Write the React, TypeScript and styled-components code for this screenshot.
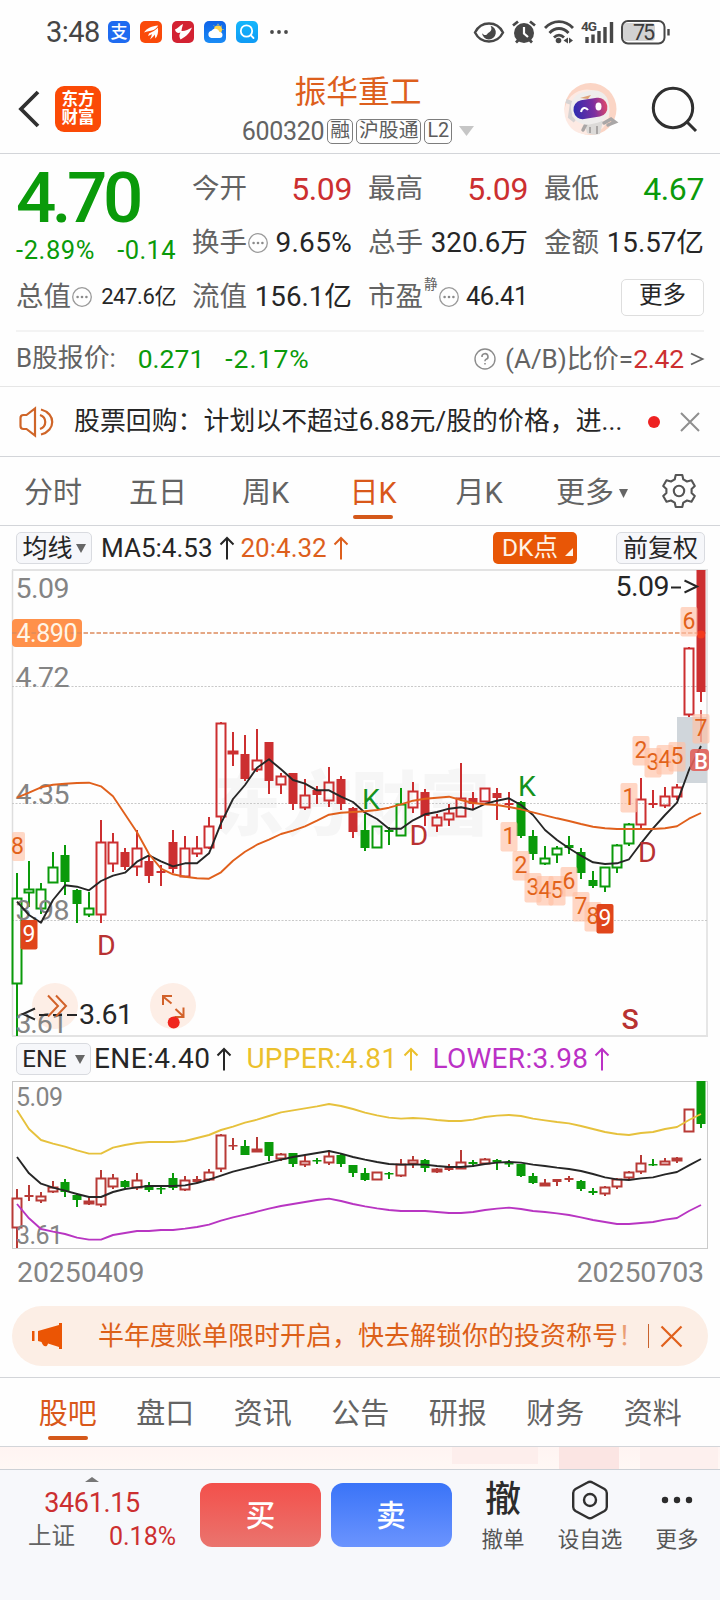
import React from "react";
import styled, { createGlobalStyle } from "styled-components";

const FONT = `Roboto, "Noto Sans CJK SC", sans-serif`;
const ORANGE = "#dd5f1d";
const RED = "#cc2f30";
const GREEN = "#0a9a0a";
const GREY = "#636363";
const INK = "#262626";
const LINE = "#d3d5d9";

const GlobalStyle = createGlobalStyle`
  * { box-sizing: border-box; }
  body { margin: 0; background: #fff; font-family: ${FONT}; color: ${INK}; }
  svg { display: block; flex: none; overflow: visible; }
`;

const Page = styled.div`
  width: 720px;
  height: 1600px;
  overflow: hidden;
  display: flex;
  flex-direction: column;
  background: #fefefe;
`;

const Text = styled.span<{ $size: number; $color?: string; $weight?: number; $ls?: number; $ml?: number; $dy?: number }>`
  flex: none;
  white-space: nowrap;
  line-height: 1;
  font-size: ${(p) => p.$size}px;
  color: ${(p) => p.$color ?? INK};
  font-weight: ${(p) => p.$weight ?? 400};
  letter-spacing: ${(p) => p.$ls ?? 0}px;
  margin-left: ${(p) => p.$ml ?? 0}px;
  transform: translateY(${(p) => p.$dy ?? 0}px);
`;

/* ---------- status bar ---------- */

const StatusBar = styled.div`
  height: 64px;
  padding: 0 49px 0 46px;
  display: flex;
  align-items: center;
  justify-content: space-between;
`;
const StatusGroup = styled.div`
  display: flex;
  align-items: center;
`;
const AppIcons = styled.div`
  display: flex;
  gap: 10px;
  margin-left: 8px;
`;
const AppIcon = styled.div<{ $bg: string }>`
  width: 22px;
  height: 22px;
  border-radius: 5px;
  background: ${(p) => p.$bg};
  color: #fff;
  font-size: 17px;
  line-height: 22px;
  font-weight: 500;
  text-align: center;
`;

function StatusIcons() {
  return (
    <svg width="198" height="26" viewBox="473 19 198 26" fill="none" stroke="#474747" strokeWidth="2.4">
      <path d="M475 32.500C481 20.500 497 20.500 503 32.500C497 44.500 481 44.500 475 32.500Z" />
      <path d="M490.500 25.800A6.900 6.900 0 1 1 482 33C484 36 487 35.500 488 33C491 32 492.500 29 490.500 25.800Z" fill="#474747" stroke="none" />
      <circle cx="524" cy="33" r="10" fill="#474747" stroke="none" />
      <path d="M524 27V33.500L528 37" stroke="#fff" strokeWidth="2.200" />
      <path d="M513 25.500L518 21.500M535 25.500L530 21.500M516 42.500L518.500 40M532 42.500L529.500 40" strokeWidth="2.800" />
      <path d="M545 28C553 19.500 565 19.500 573 28M549.500 33C555 27 563 27 568.500 33M554 37.500C557 34.500 561 34.500 564 37.500" strokeWidth="2.800" />
      <circle cx="558.500" cy="40.500" r="2.800" fill="#474747" stroke="none" />
      <path d="M563.500 40.500L568 37.500V43.500ZM573 40.500L569 37.500V43.500Z" fill="#474747" stroke="none" />
      <text x="581" y="31" fontFamily={FONT} fontSize="13.500" fontWeight="700" fill="#474747" stroke="none" textLength="16">4G</text>
      <path d="M587 37V43M593 34.500V43M599 31V43M605 27V43M611.500 22V43" strokeWidth="3.400" />
      <rect x="623" y="23" width="32" height="18" rx="4" fill="#d2d2d2" stroke="none" />
      <rect x="622" y="21" width="42.500" height="22.500" rx="6" strokeWidth="2" />
      <path d="M668.500 29V35.500" strokeWidth="2.400" />
      <text x="633" y="40" fontFamily={FONT} fontSize="21.500" fill="#3c3c3c" stroke="none" textLength="22">75</text>
    </svg>
  );
}

function FlameGlyph() {
  return (
    <svg width="22" height="22" viewBox="0 0 22 22" fill="#fff">
      <path d="M4 11.500C7 7 12 5 18 4.500C17.500 6 16 7.500 13.500 9C10 10 7 10.500 4 11.500ZM9 12.500C12 11 16 9 18 6.500C18 10 15 14.500 10 18.500C11.500 15.500 12 14 11.500 13C10.500 14 9.500 14.500 8 15Z" />
      <path d="M14 12C16 10 17 9 18 7.500C18.500 11 17.500 15 15.500 17.500C15 15.500 15 14 14 12Z" />
    </svg>
  );
}
function BirdGlyph() {
  return (
    <svg width="22" height="22" viewBox="0 0 22 22" fill="#fff">
      <path d="M3 8.500C5.500 7.500 8 4.500 11 3C10.300 6 9.500 8.500 9.500 10C12.500 10.500 16.500 8.500 20 6.500C18 11.500 14.500 15.500 8.500 18.500C7 15.500 7 14 8.500 11.500C6 12.500 3.500 11.500 3 8.500Z" />
    </svg>
  );
}
function WeatherGlyph() {
  return (
    <svg width="22" height="22" viewBox="0 0 22 22">
      <circle cx="14" cy="8.500" r="4" fill="#ffd44a" />
      <path d="M14 2.800V4M19.500 8.500H18.500M18 4.500L17.200 5.300M9.800 4.500L10.500 5.300" stroke="#ffd44a" />
      <path d="M7.500 17A3.700 3.700 0 0 1 7.500 9.700A4.500 4.500 0 0 1 15.500 11A3 3 0 0 1 15.500 17Z" fill="#fff" />
    </svg>
  );
}
function LensGlyph() {
  return (
    <svg width="22" height="22" viewBox="0 0 22 22" fill="none" stroke="#fff" strokeWidth="1.800" strokeLinecap="round">
      <circle cx="10.500" cy="10" r="5.700" />
      <path d="M14.700 14.200L17.500 17" />
    </svg>
  );
}

/* ---------- header ---------- */

const Header = styled.header`
  height: 90px;
  border-bottom: 1px solid ${LINE};
  padding: 0 22px 0 18px;
  display: flex;
  align-items: flex-start;
`;
const HeaderSide = styled.div<{ $right?: boolean }>`
  width: 210px;
  height: 90px;
  display: flex;
  align-items: center;
  justify-content: ${(p) => (p.$right ? "flex-end" : "flex-start")};
`;
const BrandLogo = styled.div`
  width: 46px;
  height: 46px;
  margin-left: 15px;
  border-radius: 9px;
  background: #fb4a06;
  color: #fff;
  display: grid;
  place-content: center;
  font-size: 16.500px;
  line-height: 18px;
  font-weight: 700;
`;
const HeaderCenter = styled.div`
  flex: 1;
  height: 90px;
  display: flex;
  flex-direction: column;
  align-items: center;
`;
const TitleLine = styled.div`
  height: 52px;
  padding-top: 13px;
`;
const CodeLine = styled.div`
  display: flex;
  align-items: center;
  gap: 3px;
  height: 30px;
`;
const Tag = styled.span`
  height: 25px;
  border: 1.500px solid #7d7d7d;
  border-radius: 5px;
  padding: 0 2px;
  font-size: 19.800px;
  line-height: 21px;
  color: #5c5c5c;
`;

function Robot() {
  return (
    <svg width="54" height="54" viewBox="563 83 54 54">
      <circle cx="590.500" cy="110" r="26" fill="#fbd5c5" />
      <circle cx="587" cy="113" r="22.500" fill="#fdeae3" />
      <path d="M584 122H603L600 135Q592 137 587 134Z" fill="#dcdad8" />
      <path d="M586 125L583 131M604 124L611 120L615 123L608 126" fill="none" stroke="#aaa7a7" strokeWidth="3.500" strokeLinecap="round" />
      <path d="M590 128V134M597 127V135" stroke="#a9a6a5" strokeWidth="2" />
      <path d="M566 102L572 104L570 118L575 122" fill="none" stroke="#d6d3d3" strokeWidth="4" />
      <rect x="571" y="92" width="38" height="33" rx="15" fill="#efedec" transform="rotate(-12 590 108)" />
      <path d="M580 99L591 96L588 100Z" fill="#dda276" />
      <defs>
        <linearGradient id="visor" x1="0" x2="1">
          <stop offset="0" stopColor="#2d2bb0" />
          <stop offset="0.600" stopColor="#7b2fa0" />
          <stop offset="1" stopColor="#e0486a" />
        </linearGradient>
      </defs>
      <rect x="573.500" y="100" width="34" height="19" rx="9" fill="url(#visor)" transform="rotate(-9 590 110)" />
      <path d="M581 113C582 108 586 108 588 111" fill="none" stroke="#fff" strokeWidth="2" />
      <ellipse cx="598.500" cy="107.500" rx="3" ry="4" fill="#fff" />
    </svg>
  );
}

/* ---------- quote ---------- */

const Quote = styled.section`
  margin-top: 8px;
  padding: 0 16px;
  display: grid;
  grid-template-columns: repeat(4, 160px);
  grid-template-rows: 54px 54px 54px;
  column-gap: 16px;
`;
const PriceCell = styled.div`
  grid-row: span 2;
`;
const BigPrice = styled.div`
  height: 70px;
  line-height: 72px;
  font-size: 71px;
  font-weight: 500;
  letter-spacing: -4.500px;
  color: ${GREEN};
`;
const Cell = styled.div<{ $h?: number }>`
  height: ${(p) => p.$h ?? 54}px;
  display: flex;
  align-items: center;
  justify-content: space-between;
`;
const Label = styled.span`
  display: flex;
  align-items: center;
  font-size: 27.500px;
  line-height: 1;
  color: ${GREY};
  gap: 1px;
`;
const Superscript = styled.sup`
  font-size: 13.500px;
  line-height: 1;
  align-self: flex-start;
  margin: -5px 0 0 0;
`;
const MoreButton = styled.button`
  width: 83px;
  height: 37px;
  margin-left: auto;
  border: 1px solid #dedede;
  border-radius: 5px;
  background: #fff;
  padding: 0 0 3px;
  font: 400 23.500px/1 ${FONT};
  color: ${INK};
`;
const Rule = styled.div`
  height: 2px;
  margin: 6px 16px 0;
  background: #f3f3f3;
`;
const BRow = styled.section`
  height: 55px;
  padding: 0 16px;
  display: flex;
  align-items: center;
  border-bottom: 1px solid #e6e6e6;
`;
const Push = styled.div`
  margin-left: auto;
  display: flex;
  align-items: center;
`;

function Dots() {
  return (
    <svg width="20" height="20" viewBox="0 0 20 20">
      <circle cx="10" cy="10" r="9.300" fill="none" stroke="#9a9a9a" strokeWidth="1.300" />
      <g fill="#8a8a8a">
        <circle cx="5.600" cy="10" r="1.300" />
        <circle cx="10" cy="10" r="1.300" />
        <circle cx="14.400" cy="10" r="1.300" />
      </g>
    </svg>
  );
}

/* ---------- notice and tabs ---------- */

const Notice = styled.section`
  height: 70px;
  border-bottom: 1px solid ${LINE};
  padding: 0 20px 0 19px;
  display: flex;
  align-items: center;
`;
const RedDot = styled.i`
  width: 12px;
  height: 12px;
  border-radius: 50%;
  background: #ee2222;
  margin: 0 20px 0 auto;
`;
const Tabs = styled.nav<{ $columns: string; $pad: string }>`
  height: 69px;
  flex: none;
  border-bottom: 1px solid ${LINE};
  padding: ${(p) => p.$pad};
  display: grid;
  grid-template-columns: ${(p) => p.$columns};
`;
const Tab = styled.button<{ $active?: boolean }>`
  border: 0;
  background: none;
  padding: 0;
  font: 400 29px/1 ${FONT};
  color: ${(p) => (p.$active ? "#d9581a" : GREY)};
  display: flex;
  flex-direction: column;
  align-items: center;
  justify-content: flex-end;
  gap: 7px;
  white-space: nowrap;
  &::after {
    content: "";
    width: 40px;
    height: 4px;
    border-radius: 2px;
    margin-bottom: 6px;
    background: ${(p) => (p.$active ? "#d4581a" : "transparent")};
  }
`;
const Inline = styled.span`
  display: flex;
  align-items: center;
  gap: 5px;
`;
const GearCell = styled.div`
  display: grid;
  place-items: center;
`;

/* ---------- legends ---------- */

const Legend = styled.div<{ $h: number; $pt: number }>`
  height: ${(p) => p.$h}px;
  padding: ${(p) => p.$pt}px 15px 0 16px;
  display: flex;
  align-items: center;
  flex: none;
`;
const Selector = styled.button<{ $w: number; $gap?: number }>`
  width: ${(p) => p.$w}px;
  height: 32px;
  padding: 0;
  border: 1px solid #d9dbe0;
  border-radius: 5px;
  background: #f6f7fa;
  font: 400 25px/1 ${FONT};
  color: ${INK};
  display: flex;
  align-items: center;
  justify-content: center;
  gap: ${(p) => p.$gap ?? 3}px;
  white-space: nowrap;
  flex: none;
`;
const DkButton = styled.button`
  width: 84px;
  height: 32px;
  margin: 0 39px 0 auto;
  padding: 0 4px 0 9px;
  border: 0;
  border-radius: 5px;
  background: #e85606;
  color: #fff3e6;
  font: 400 24.500px/1 ${FONT};
  display: flex;
  align-items: center;
  justify-content: space-between;
  white-space: nowrap;
`;

function Caret({ w = 10, h = 9, color = "#666" }: { w?: number; h?: number; color?: string }) {
  return (
    <svg width={w} height={h} viewBox="0 0 10 10" preserveAspectRatio="none">
      <path d="M0 0H10L5 10Z" fill={color} />
    </svg>
  );
}
function UpArrow({ color }: { color: string }) {
  return (
    <svg width="16" height="24" viewBox="0 0 16 24" fill="none" stroke={color} strokeWidth="2">
      <path d="M8 23.500V2M1.500 8.500L8 2L14.500 8.500" />
    </svg>
  );
}
const ArrowBox = styled.span`
  margin-left: 6px;
`;

/* ---------- charts ---------- */

// Each candle: high, low, body top, body bottom, kind
// r / g = hollow red / green, R / G = solid red / green.
type Candle = [number, number, number, number, "r" | "g" | "R" | "G"];

const dayCandles: Candle[] = [
  [873, 1036, 898, 984, "g"], [861, 907, 889, 893, "g"], [883, 914, 889, 909, "g"], [852, 883, 867, 883, "g"],
  [845, 895, 855, 882, "G"], [889, 923, 890, 904, "G"], [892, 917, 908, 915, "g"], [820, 923, 842, 915, "r"],
  [833, 872, 842, 864, "r"], [848, 870, 852, 867, "R"], [830, 876, 848, 867, "r"], [856, 883, 861, 876, "R"],
  [865, 886, 871, 873, "R"], [830, 873, 842, 869, "R"], [836, 877, 848, 877, "r"], [836, 857, 848, 854, "r"],
  [817, 849, 826, 848, "r"], [722, 829, 723, 817, "r"], [732, 766, 751, 754, "r"], [735, 781, 754, 779, "R"],
  [729, 772, 760, 770, "r"], [742, 794, 742, 781, "R"], [773, 794, 776, 785, "r"], [773, 810, 773, 804, "R"],
  [779, 810, 795, 808, "r"], [786, 804, 790, 795, "R"], [767, 807, 782, 801, "r"], [776, 810, 779, 804, "R"],
  [807, 838, 808, 832, "R"], [814, 851, 830, 848, "G"], [826, 848, 826, 848, "g"], [827, 845, 830, 832, "G"],
  [788, 836, 804, 836, "g"], [782, 813, 791, 808, "r"], [789, 826, 792, 816, "R"], [814, 832, 817, 826, "r"],
  [804, 826, 813, 820, "r"], [763, 817, 798, 817, "r"], [792, 810, 798, 804, "R"], [788, 802, 788, 802, "r"],
  [788, 820, 793, 798, "R"], [792, 810, 803, 805, "R"], [801, 838, 802, 836, "G"], [830, 860, 836, 854, "G"],
  [846, 865, 858, 864, "g"], [846, 863, 848, 855, "g"], [836, 854, 845, 848, "G"], [848, 879, 852, 873, "G"],
  [871, 888, 880, 886, "G"], [867, 892, 867, 887, "g"], [844, 873, 845, 868, "g"], [823, 846, 824, 844, "g"],
  [778, 830, 799, 825, "r"], [790, 808, 803, 805, "R"], [787, 808, 796, 806, "r"], [784, 800, 787, 797, "r"],
  [647, 717, 648, 715, "r"], [570, 702, 570, 692, "R"],
];

const eneCandles: Candle[] = [
  [1189, 1248, 1198, 1228, "r"], [1185, 1201, 1195, 1197, "R"], [1192, 1203, 1196, 1201, "r"], [1181, 1193, 1187, 1192, "r"],
  [1179, 1197, 1182, 1192, "G"], [1193, 1207, 1195, 1200, "G"], [1197, 1205, 1201, 1204, "r"], [1170, 1207, 1178, 1205, "r"],
  [1174, 1189, 1178, 1187, "r"], [1180, 1188, 1181, 1187, "G"], [1173, 1190, 1180, 1188, "r"], [1182, 1192, 1185, 1190, "G"],
  [1186, 1194, 1188, 1189, "G"], [1173, 1190, 1178, 1188, "G"], [1176, 1191, 1180, 1190, "r"], [1176, 1183, 1179, 1182, "R"],
  [1169, 1181, 1172, 1180, "r"], [1134, 1172, 1135, 1169, "r"], [1138, 1150, 1145, 1146, "R"], [1140, 1155, 1146, 1155, "G"],
  [1137, 1152, 1149, 1152, "r"], [1142, 1161, 1142, 1156, "G"], [1153, 1161, 1154, 1159, "r"], [1153, 1167, 1153, 1164, "G"],
  [1156, 1167, 1161, 1165, "r"], [1158, 1164, 1160, 1161, "G"], [1150, 1165, 1156, 1163, "r"], [1154, 1167, 1155, 1164, "G"],
  [1165, 1177, 1165, 1173, "G"], [1168, 1181, 1173, 1180, "G"], [1172, 1180, 1172, 1180, "r"], [1172, 1179, 1173, 1174, "G"],
  [1159, 1177, 1164, 1176, "r"], [1156, 1168, 1160, 1164, "r"], [1159, 1172, 1160, 1168, "G"], [1168, 1173, 1169, 1172, "r"],
  [1164, 1171, 1167, 1170, "R"], [1150, 1169, 1162, 1169, "r"], [1160, 1167, 1162, 1164, "G"], [1158, 1164, 1159, 1164, "r"],
  [1159, 1170, 1160, 1162, "G"], [1160, 1167, 1163, 1164, "G"], [1164, 1177, 1164, 1176, "G"], [1173, 1184, 1176, 1183, "G"],
  [1179, 1186, 1183, 1186, "r"], [1179, 1186, 1179, 1182, "R"], [1176, 1182, 1178, 1180, "R"], [1180, 1191, 1181, 1189, "G"],
  [1188, 1195, 1191, 1193, "G"], [1186, 1196, 1187, 1194, "r"], [1178, 1189, 1179, 1187, "r"], [1171, 1179, 1172, 1178, "r"],
  [1155, 1174, 1163, 1172, "r"], [1159, 1166, 1164, 1165, "G"], [1158, 1165, 1161, 1165, "r"], [1157, 1163, 1158, 1161, "r"],
  [1109, 1132, 1109, 1132, "r"], [1081, 1128, 1081, 1124, "G"],
];

const ma5 = [
  901.7, 915, 922.7, 900, 885.3, 886.7, 890.3, 881, 875.7, 872.7, 861.7, 855.3, 861.3, 866.3, 863.3, 863.3, 853.3, 823.3, 799,
  785, 767.7, 759.3, 769.3, 780, 783.7, 790.3, 790.3, 796.7, 802, 812.7, 819, 828.7, 828.7, 820.3, 814.3, 812, 808.7, 807.3,
  809.7, 804, 800.7, 798.3, 805, 815, 830, 840, 848.3, 855.7, 862.3, 864, 863.3, 859.3, 843.3, 828.3, 815, 802.7, 770, 746,
];
const ma20 = [
  797.7, 792.7, 787.3, 784.7, 783.7, 783, 782.7, 786.3, 796.3, 814.3, 832.3, 854, 868.7, 874.3, 876.7, 878.3, 878.7, 872.3,
  860.7, 851.7, 844.7, 839.7, 834, 830.7, 826.3, 820.7, 814.7, 812.7, 812, 811.3, 810, 807.7, 804.3, 800.7, 798.7, 797.7,
  796.7, 800, 803, 804.3, 805, 807, 809.3, 812.3, 815.3, 818.3, 821, 824, 826.7, 828.3, 829, 829, 829, 829, 828.3, 826.3,
  818.7, 813,
];
const eneScale = (values: number[]) => values.map((v) => 1035 + v / 3);
const upper = eneScale([
  226, 282, 315, 326, 335, 346, 356, 356, 338, 330, 324, 321, 321, 321, 318, 309, 300, 285, 275, 263, 254, 243, 232, 226, 220,
  214, 207, 213, 222, 233, 241, 248, 251, 249, 251, 255, 258, 258, 254, 246, 242, 240, 243, 251, 256, 261, 265, 273, 282, 291,
  297, 300, 294, 291, 282, 276, 255, 237,
]);
const middle = eneScale([
  366, 415, 446, 458, 467, 477, 486, 486, 471, 462, 457, 453, 453, 453, 451, 444, 434, 422, 410, 401, 392, 383, 374, 366, 360,
  354, 348, 356, 366, 374, 381, 387, 389, 388, 389, 393, 396, 396, 393, 387, 383, 381, 383, 389, 393, 398, 402, 408, 417, 427,
  433, 435, 430, 427, 418, 411, 391, 372,
]);
const lower = eneScale([
  507, 550, 582, 590, 597, 608, 614, 614, 600, 594, 588, 588, 585, 585, 581, 576, 569, 557, 547, 539, 530, 521, 513, 507, 501,
  495, 491, 498, 507, 514, 520, 525, 528, 528, 528, 531, 534, 534, 531, 525, 521, 518, 522, 528, 531, 535, 540, 547, 555, 561,
  567, 567, 564, 561, 554, 549, 528, 510,
]);

const xAt = (i: number) => 17 + i * 12;
const pointsOf = (values: number[]) => values.map((y, i) => `${xAt(i)},${y}`).join(" ");

function Candles({ data, red }: { data: Candle[]; red: string }) {
  return (
    <g>
      {data.map(([hi, lo, top, bottom, kind], i) => {
        const x = xAt(i);
        const color = kind === "r" || kind === "R" ? red : GREEN;
        const hollow = kind === "r" || kind === "g";
        return (
          <g key={i}>
            {hi < top && <rect x={x - 1} y={hi} width={2} height={top - hi} fill={color} />}
            {lo > bottom && <rect x={x - 1} y={bottom} width={2} height={lo - bottom} fill={color} />}
            {hollow ? (
              <rect x={x - 4.5} y={top + 0.5} width={9} height={Math.max(bottom - top - 1, 1)} fill="none" stroke={color} strokeWidth={2} />
            ) : (
              <rect x={x - 4.5} y={top} width={9} height={Math.max(bottom - top, 1.5)} fill={color} />
            )}
          </g>
        );
      })}
    </g>
  );
}

const countTags: [string, number, number, boolean?][] = [
  ["9", 29, 920, true], ["1", 509, 822], ["2", 521, 851], ["3", 533, 873], ["4", 545, 876], ["5", 557, 876],
  ["6", 569, 867], ["7", 581, 892], ["8", 593, 902], ["9", 605, 904, true], ["1", 629, 783], ["2", 641, 736],
  ["3", 653, 748], ["4", 665, 745], ["5", 677, 742], ["6", 689, 607], ["7", 701, 714],
];

const Frame = styled.svg`
  font-family: ${FONT};
  flex: none;
`;

function DayChart() {
  return (
    <Frame width="720" height="472" viewBox="0 566 720 472">
      <text x="214" y="830" fontSize="70" fontWeight="900" fill="#f6f6f6" textLength="276">东方财富</text>
      <path d="M12.500 1036V570M707 570V1036" stroke="#dedede" strokeWidth="1.500" />
      <path d="M12 570H708M12 1036H708" stroke="#e3e3e3" strokeWidth="2" />
      <path d="M12 686.500H708M12 803.500H708M12 920.500H708" stroke="#c9c9c9" strokeDasharray="2 1.500" />
      <rect x="677" y="717" width="30" height="66" fill="#d0d6db" />
      <rect x="12" y="619" width="70" height="28" rx="4" fill="#ff914b" />
      <path d="M12 633H707" stroke="#dd8a5c" strokeWidth="1.500" strokeDasharray="4.500 2" />

      <g fill="#848484" fontSize="28.500">
        <text x="15.500" y="597.500" textLength="54">5.09</text>
        <text x="15.500" y="687" textLength="54">4.72</text>
      </g>
      <text x="16.500" y="641.500" fontSize="25" fill="#fff5e6" textLength="61">4.890</text>

      <circle cx="55" cy="1006" r="23" fill="#fdeee6" />
      <circle cx="173" cy="1006" r="23" fill="#fdeee6" />

      <Candles data={dayCandles} red={RED} />
      <path d="M701 710V742" stroke={RED} strokeWidth="1.500" />
      <circle cx="701" cy="634.500" r="4" fill="#f23a1e" />
      <g fill="#848484" fontSize="28.500">
        <text x="15.500" y="804" textLength="54">4.35</text>
        <text x="15.500" y="919.500" textLength="54">3.98</text>
        <text x="15.500" y="1033" textLength="52">3.61</text>
      </g>
      <g fill="none" strokeWidth="1.900" strokeLinejoin="round">
        <polyline points={pointsOf(ma5)} stroke="#262626" />
        <polyline points={pointsOf(ma20)} stroke="#e0601c" />
      </g>

      <g fontSize="23" textAnchor="middle">
        <rect x="12" y="832" width="13" height="29" rx="2" fill="#ffc7ae" fillOpacity="0.700" />
        <text x="17.500" y="854" fill="#e2621a">8</text>
        {countTags.map(([label, x, y, solid], i) => (
          <g key={i}>
            <rect
              x={x - 8.5}
              y={y}
              width={17}
              height={29.5}
              rx={2}
              fill={solid ? "#e0451a" : "#ffc0a4"}
              fillOpacity={solid ? 1 : 0.65}
            />
            <text x={x} y={y + 22} fill={solid ? "#fff" : "#e2621a"}>{label}</text>
          </g>
        ))}
      </g>
      <rect x="690" y="749" width="19" height="22" rx="4" fill="#e0605a" fillOpacity="0.900" />
      <text x="694" y="768.500" fontSize="22" fontWeight="500" fill="#fff">B</text>

      <g fontSize="28.500" fill="#b83232">
        <text x="97" y="955">D</text>
        <text x="409.500" y="844.500">D</text>
        <text x="638" y="861.500">D</text>
        <text x="621.500" y="1029" fontWeight="500">S</text>
      </g>
      <g fontSize="28.500" fill="#14921c">
        <text x="362" y="808.500">K</text>
        <text x="518" y="796">K</text>
      </g>
      <g fontSize="28.500" fill={INK}>
        <text x="615.500" y="596" textLength="54">5.09</text>
        <text x="79" y="1024" textLength="54">3.61</text>
      </g>
      <g fill="none" stroke={INK} strokeWidth="2">
        <path d="M671 587.500H681M684.500 580.500L697 586.500L684.500 592.500" />
        <path d="M35 1008.500L23 1014L35 1019.500M39 1015H48M53 1015H62M67 1015H77" />
      </g>
      <g fill="none" stroke="#d2622a" strokeWidth="2">
        <path d="M48 995.500L58 1006L48 1016.500M56 995.500L66 1006L56 1016.500" />
        <path d="M171.500 1003.500L163 996.500M163 1005V996H172M175.500 1009L183.500 1016.500M183.500 1007.500V1017H174.500" />
      </g>
      <circle cx="173.700" cy="1022.500" r="6" fill="#f0261e" />
    </Frame>
  );
}

function EneChart() {
  return (
    <Frame width="720" height="170" viewBox="0 1080 720 170">
      <rect x="12.500" y="1081.500" width="695" height="167" fill="none" stroke="#cbcbcb" />
      <text x="16" y="1106" fontSize="25" fill="#848484" textLength="47">5.09</text>
      <Candles data={eneCandles} red="#b83a36" />
      <text x="16" y="1244" fontSize="25" fill="#848484" textLength="47">3.61</text>
      <g fill="none" strokeWidth="1.900" strokeLinejoin="round">
        <polyline points={pointsOf(upper)} stroke="#e6c13c" />
        <polyline points={pointsOf(middle)} stroke="#262626" />
        <polyline points={pointsOf(lower)} stroke="#b835c2" />
      </g>
    </Frame>
  );
}

const Dates = styled.div`
  height: 54px;
  padding: 0 16px 8px 17px;
  display: flex;
  align-items: center;
  justify-content: space-between;
`;

/* ---------- banner, tabs, bottom bar ---------- */

const Banner = styled.section`
  height: 60px;
  flex: none;
  margin: 2px 12px 11px;
  border-radius: 30px;
  background: #fceee5;
  padding: 0 26px 0 20px;
  display: flex;
  align-items: center;
`;
const BannerText = styled.span`
  flex: 1;
  margin-left: 36px;
  font-size: 26px;
  line-height: 1;
  color: #dc6018;
  white-space: nowrap;
`;
const Faded = styled.span`
  opacity: 0.55;
`;
const Bar = styled.i`
  width: 1px;
  height: 24px;
  background: #c9622c;
  margin-right: 12px;
`;
const TabsTop = styled.div`
  border-top: 1px solid ${LINE};
`;
const Strip = styled.div`
  height: 22px;
  flex: none;
  background: linear-gradient(#fff4f2, #fff8f5);
  padding-left: 452px;
  display: grid;
  grid-template-columns: 86px 60px 78px;
  column-gap: 21px;
`;
const StripBlock = styled.i<{ $bg: string; $h?: number }>`
  height: ${(p) => p.$h ?? 22}px;
  background: ${(p) => p.$bg};
`;
const BottomBar = styled.footer`
  flex: 1;
  border-top: 1px solid #cdd1d6;
  background: #f7f8fb;
  padding-left: 16px;
  display: flex;
  align-items: flex-start;
`;
const IndexBox = styled.div`
  width: 184px;
  flex: none;
  padding: 7px 32px 0 0;
  display: flex;
  flex-direction: column;
  align-items: center;
`;
const IndexRow = styled.div`
  width: 148px;
  flex: none;
  margin: 13px 0 0 20px;
  display: flex;
  justify-content: space-between;
  align-items: center;
`;
const TradeButton = styled.button<{ $from: string; $to: string }>`
  width: 121px;
  height: 64px;
  flex: none;
  margin: 13px 9.500px 0 0;
  padding: 3px 0 0;
  border: 0;
  border-radius: 12px;
  background: linear-gradient(${(p) => p.$from}, ${(p) => p.$to});
  color: #fff;
  font: 500 29.500px/1 ${FONT};
`;
const Actions = styled.div`
  display: grid;
  flex: none;
  grid-template-columns: 84px 90px 84px;
`;
const Action = styled.div`
  display: flex;
  flex-direction: column;
  align-items: center;
`;
const ActionIcon = styled.div`
  height: 59px;
  display: grid;
  place-items: center;
  font-size: 36px;
  line-height: 36px;
  font-weight: 500;
  color: #2c2c2c;
`;

const lowerTabs = ["股吧", "盘口", "资讯", "公告", "研报", "财务", "资料"];

export default function App() {
  return (
    <Page>
      <GlobalStyle />

      <StatusBar>
        <StatusGroup>
          <Text $size={29} $color="#454545" $ls={-0.5}>3:48</Text>
          <AppIcons>
            <AppIcon $bg="#1f6bf0">支</AppIcon>
            <AppIcon $bg="#fa4a0a"><FlameGlyph /></AppIcon>
            <AppIcon $bg="#d32232"><BirdGlyph /></AppIcon>
            <AppIcon $bg="linear-gradient(#0d62e8, #1b8cf5)"><WeatherGlyph /></AppIcon>
            <AppIcon $bg="linear-gradient(#15b6fb, #0f9bf5)"><LensGlyph /></AppIcon>
          </AppIcons>
          <Text as="div" $size={10} $ml={12}>
            <svg width="18" height="4" viewBox="0 0 18 4" fill="#4a4a4a">
              <circle cx="2" cy="2" r="1.900" />
              <circle cx="9" cy="2" r="1.900" />
              <circle cx="16" cy="2" r="1.900" />
            </svg>
          </Text>
        </StatusGroup>
        <StatusIcons />
      </StatusBar>

      <Header>
        <HeaderSide>
          <svg width="22" height="38" viewBox="0 0 22 38" fill="none" stroke="#303030" strokeWidth="3.800">
            <path d="M20 2L3 19L20 36" />
          </svg>
          <BrandLogo>
            <span>东方</span>
            <span>财富</span>
          </BrandLogo>
        </HeaderSide>
        <HeaderCenter>
          <TitleLine>
            <Text $size={31.8} $color={ORANGE}>振华重工</Text>
          </TitleLine>
          <CodeLine>
            <Text $size={25} $color={GREY} $ls={-0.3}>600320</Text>
            <Tag>融</Tag>
            <Tag>沪股通</Tag>
            <Tag>L2</Tag>
            <Text as="div" $size={10} $ml={4}><Caret w={15} h={10} color="#c6c6c6" /></Text>
          </CodeLine>
        </HeaderCenter>
        <HeaderSide $right>
          <Robot />
          <Text as="div" $size={10} $ml={34}>
            <svg width="47" height="47" viewBox="0 0 47 47" fill="none" stroke="#303030" strokeWidth="3">
              <circle cx="22" cy="22" r="19.700" />
              <path d="M35.500 35.500L45 45" />
            </svg>
          </Text>
        </HeaderSide>
      </Header>

      <Quote>
        <PriceCell>
          <BigPrice>4.70</BigPrice>
          <Cell $h={38}>
            <Text $size={25.5} $color={GREEN} $ls={0.6}>-2.89%</Text>
            <Text $size={25.5} $color={GREEN} $ls={0.4}>-0.14</Text>
          </Cell>
        </PriceCell>
        <Cell><Label>今开</Label><Text $size={32} $color={RED} $ls={-0.4}>5.09</Text></Cell>
        <Cell><Label>最高</Label><Text $size={32} $color={RED} $ls={-0.4}>5.09</Text></Cell>
        <Cell><Label>最低</Label><Text $size={32} $color={GREEN} $ls={-0.4}>4.67</Text></Cell>
        <Cell><Label>换手<Dots /></Label><Text $size={28} $ls={0.3}>9.65%</Text></Cell>
        <Cell><Label>总手</Label><Text $size={27.7}>320.6万</Text></Cell>
        <Cell><Label>金额</Label><Text $size={27.7}>15.57亿</Text></Cell>
        <Cell><Label>总值<Dots /></Label><Text $size={22} $ls={-0.4}>247.6亿</Text></Cell>
        <Cell><Label>流值</Label><Text $size={27.7}>156.1亿</Text></Cell>
        <Cell><Label>市盈<Superscript>静</Superscript><Dots /></Label><Text $size={25.5} $ls={-0.4}>46.41</Text></Cell>
        <Cell><MoreButton>更多</MoreButton></Cell>
      </Quote>

      <Rule />
      <BRow>
        <Text $size={25.8} $color={GREY}>B股报价:</Text>
        <Text $size={26.5} $color={GREEN} $ml={22}>0.271</Text>
        <Text $size={26.5} $color={GREEN} $ml={21} $ls={1}>-2.17%</Text>
        <Push>
          <svg width="22" height="22" viewBox="0 0 22 22" fill="none" stroke="#8c8c8c" strokeWidth="1.400">
            <circle cx="11" cy="11" r="10" />
            <path d="M8 9A3 3 0 1 1 11.800 11.500C11 11.900 11 12.300 11 13.200M11 15V16.600" strokeWidth="1.600" />
          </svg>
          <Text $size={26} $color={GREY} $ml={9}>(A/B)比价=</Text>
          <Text $size={26.5} $color={RED} $ls={-0.2}>2.42</Text>
          <Text as="div" $size={10} $ml={6}>
            <svg width="14" height="14" viewBox="0 0 14 14" fill="none" stroke={GREY} strokeWidth="1.800">
              <path d="M1 1.500L12.500 7L1 12.500" />
            </svg>
          </Text>
        </Push>
      </BRow>

      <Notice>
        <svg width="35" height="30" viewBox="0 0 35 30" fill="none" stroke="#cf6528" strokeWidth="2.200">
          <path d="M1.500 11Q1.500 8 4.500 8H7.500L16 1.500V28.500L7.500 22H4.500Q1.500 22 1.500 19ZM21 8C28 10.500 28 19.500 21 22M22 2.500C37 6.500 37 23.500 22 27.500" />
        </svg>
        <Text $size={25.8} $ml={20} $ls={0.1}>股票回购：计划以不超过6.88元/股的价格，进...</Text>
        <RedDot />
        <svg width="20" height="20" viewBox="0 0 20 20" stroke="#8f8f8f" strokeWidth="2">
          <path d="M1 1L19 19M19 1L1 19" />
        </svg>
      </Notice>

      <Tabs $columns="106px 104px 111px 104px 108px 118px 56px" $pad="0">
        <Tab>分时</Tab>
        <Tab>五日</Tab>
        <Tab>周K</Tab>
        <Tab $active>日K</Tab>
        <Tab>月K</Tab>
        <Tab><Inline>更多<Caret w={9} h={9} /></Inline></Tab>
        <GearCell>
          <svg width="36" height="36" viewBox="0 0 36 36" fill="none" stroke="#555" strokeWidth="2.100" strokeLinejoin="round">
            <circle cx="18" cy="18" r="5.200" />
            <path d="M14.700 2H21.300L22.300 6.400L26 8.500L30.500 7.200L33.800 13L30.600 16V20L33.800 23L30.500 28.800L26 27.500L22.300 29.600L21.300 34H14.700L13.700 29.600L10 27.500L5.500 28.800L2.200 23L5.400 20V16L2.200 13L5.500 7.200L10 8.500L13.700 6.400Z" />
          </svg>
        </GearCell>
      </Tabs>

      <Legend $h={40} $pt={4}>
        <Selector $w={76}>均线<Caret w={10} h={9} /></Selector>
        <Text $size={26} $ml={9}>MA5:4.53</Text>
        <ArrowBox><UpArrow color={INK} /></ArrowBox>
        <Text $size={26} $ml={6} $color={ORANGE}>20:4.32</Text>
        <ArrowBox><UpArrow color={ORANGE} /></ArrowBox>
        <DkButton>
          DK点
          <svg width="8" height="22" viewBox="0 0 8 22"><path d="M8 11V19H0Z" fill="#fff3e6" /></svg>
        </DkButton>
        <Selector $w={89}>前复权</Selector>
      </Legend>
      <DayChart />

      <Legend $h={42} $pt={0}>
        <Selector $w={75} $gap={8}>
          <Text $size={24}>ENE</Text>
          <Caret w={10} h={9} />
        </Selector>
        <Text $size={28} $ml={3} $ls={0.4}>ENE:4.40</Text>
        <ArrowBox><UpArrow color={INK} /></ArrowBox>
        <Text $size={28} $ml={14} $ls={0.3} $color="#ebc02c">UPPER:4.81</Text>
        <ArrowBox><UpArrow color="#ebc02c" /></ArrowBox>
        <Text $size={28} $ml={13} $ls={0.3} $color="#bb31c6">LOWER:3.98</Text>
        <ArrowBox><UpArrow color="#bb31c6" /></ArrowBox>
      </Legend>
      <EneChart />
      <Dates>
        <Text $size={28.5} $color="#848484" $ls={-0.1}>20250409</Text>
        <Text $size={28.5} $color="#848484" $ls={-0.1}>20250703</Text>
      </Dates>

      <Banner>
        <svg width="30" height="26" viewBox="0 0 30 26" fill="#eb5504">
          <path d="M0 8H2.500V18H0ZM6 8L27 2V0H30V26H27V24L16 20.500C15 25 11 24 9.500 19L6 18Z" />
        </svg>
        <BannerText>半年度账单限时开启，快去解锁你的投资称号<Faded>！</Faded></BannerText>
        <Bar />
        <svg width="21" height="21" viewBox="0 0 21 21" stroke="#e0601c" strokeWidth="2.200">
          <path d="M0.500 0.500L20.500 20.500M20.500 0.500L0.500 20.500" />
        </svg>
      </Banner>

      <TabsTop />
      <Tabs $columns="repeat(7, 97.500px)" $pad="0 0 0 19px">
        {lowerTabs.map((name, i) => (
          <Tab key={name} $active={i === 0}>{name}</Tab>
        ))}
      </Tabs>
      <Strip>
        <StripBlock $bg="#fdeeec" $h={17} />
        <StripBlock $bg="#fbe5e3" />
        <StripBlock $bg="#fdf0ee" />
      </Strip>

      <BottomBar>
        <IndexBox>
          <svg width="14" height="5" viewBox="0 0 14 5"><path d="M0 5L7 0L14 5Z" fill="#777" /></svg>
          <Text $size={27} $color={RED} $ls={-0.4} $dy={8}>3461.15</Text>
          <IndexRow>
            <Text $size={23.5} $color={GREY} $dy={2}>上证</Text>
            <Text $size={25} $color={RED} $dy={2}>0.18%</Text>
          </IndexRow>
        </IndexBox>
        <TradeButton $from="#f3504b" $to="#ea746e">买</TradeButton>
        <TradeButton $from="#3a74f8" $to="#6b94fe">卖</TradeButton>
        <Actions>
          <Action>
            <ActionIcon>撤</ActionIcon>
            <Text $size={21.5} $color="#555">撤单</Text>
          </Action>
          <Action>
            <ActionIcon>
              <svg width="38" height="40" viewBox="0 0 38 40" fill="none" stroke="#303030" strokeWidth="2.400" strokeLinejoin="round">
                <path d="M16.500 2.500Q19 1 21.500 2.500L33.500 9Q35.800 10.500 35.800 13V27Q35.800 29.500 33.500 31L21.500 37.500Q19 39 16.500 37.500L4.500 31Q2.200 29.500 2.200 27V13Q2.200 10.500 4.500 9Z" />
                <circle cx="19" cy="20" r="6" />
              </svg>
            </ActionIcon>
            <Text $size={21.5} $color="#555">设自选</Text>
          </Action>
          <Action>
            <ActionIcon>
              <svg width="32" height="8" viewBox="0 0 32 8" fill="#2c2c2c">
                <circle cx="4" cy="4" r="3.200" />
                <circle cx="16" cy="4" r="3.200" />
                <circle cx="28" cy="4" r="3.200" />
              </svg>
            </ActionIcon>
            <Text $size={21.5} $color="#555">更多</Text>
          </Action>
        </Actions>
      </BottomBar>
    </Page>
  );
}
